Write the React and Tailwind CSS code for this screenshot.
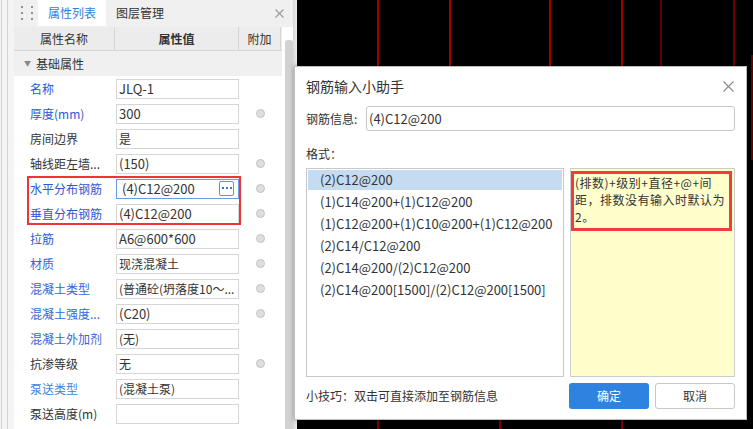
import React from "react";

const rows = [
  { label: "名称", color: "#2c56d8", value: "JLQ-1", lat: true, dot: false },
  { label: "厚度(mm)", color: "#2c56d8", value: "300", lat: true, dot: true },
  { label: "房间边界", color: "#333333", value: "是", lat: false, dot: false },
  { label: "轴线距左墙...", color: "#333333", value: "(150)", lat: true, dot: true },
  { label: "水平分布钢筋", color: "#2c56d8", value: "(4)C12@200", lat: true, dot: true, focus: true },
  { label: "垂直分布钢筋", color: "#2c56d8", value: "(4)C12@200", lat: true, dot: true },
  { label: "拉筋", color: "#2c56d8", value: "A6@600*600", lat: true, dot: true },
  { label: "材质", color: "#3466d8", value: "现浇混凝土", lat: false, dot: true },
  { label: "混凝土类型", color: "#3466d8", value: "(普通砼(坍落度10～...", lat: false, dot: true },
  { label: "混凝土强度...", color: "#3466d8", value: "(C20)", lat: true, dot: true },
  { label: "混凝土外加剂", color: "#3466d8", value: "(无)", lat: false, dot: false },
  { label: "抗渗等级", color: "#333333", value: "无", lat: false, dot: true },
  { label: "泵送类型", color: "#3a86e0", value: "(混凝土泵)", lat: false, dot: false },
  { label: "泵送高度(m)", color: "#333333", value: "", lat: false, dot: false },
];

const formats = [
  "(2)C12@200",
  "(1)C14@200+(1)C12@200",
  "(1)C12@200+(1)C10@200+(1)C12@200",
  "(2)C14/C12@200",
  "(2)C14@200/(2)C12@200",
  "(2)C14@200[1500]/(2)C12@200[1500]",
];

function Dot() {
  return <div className="w-[9px] h-[9px] rounded-full bg-[#dedede] border border-[#c2c2c2]" />;
}

function Row({ r }) {
  return (
    <div className="h-[25px] flex items-center bg-white">
      <div
        className="w-[101px] pl-[16px] text-[12px] whitespace-nowrap overflow-hidden leading-[16px]"
        style={{ color: r.color }}
      >
        {r.label}
      </div>
      <div
        className={
          "ml-[1px] w-[123px] h-[20px] bg-white flex items-center relative " +
          (r.focus ? "border border-[#6b9be3] pl-[5px]" : "border border-[#d6d6d6] pl-[2px]")
        }
      >
        <span className={(r.lat ? "text-[13px]" : "text-[12px]") + " text-[#333] whitespace-nowrap leading-[16px]"}>
          {r.value}
        </span>
        {r.focus && (
          <div className="absolute right-[4px] top-[1px] w-[15px] h-[15px] rounded-[2px] border border-[#5d92df] bg-white flex items-center justify-center gap-[2px]">
            <span className="w-[2px] h-[2px] bg-[#3673d6]" />
            <span className="w-[2px] h-[2px] bg-[#3673d6]" />
            <span className="w-[2px] h-[2px] bg-[#3673d6]" />
          </div>
        )}
      </div>
      <div className="flex-1 flex items-center justify-center">{r.dot && <Dot />}</div>
    </div>
  );
}

function LeftPanel() {
  return (
    <div className="w-[297px] h-full flex shrink-0">
      <div className="w-[14px] h-full bg-[#f4f4f4] flex">
        <div className="w-[1px] h-full bg-[#d2d2d2] ml-[1px]" />
        <div className="w-[1px] h-full bg-[#d2d2d2] ml-[5px]" />
      </div>
      <div className="w-[279px] h-full flex flex-col bg-white">
        <div className="h-[27px] bg-[#f0f0f0] flex items-start shrink-0">
          <div className="w-[24px] pl-[7px] pt-[6px] grid grid-cols-2 gap-x-[3px] gap-y-[4px] content-start">
            {[0, 1, 2, 3, 4, 5].map((i) => (
              <span key={i} className="w-[2px] h-[2px] bg-[#8f8f8f]" />
            ))}
          </div>
          <div className="w-[68px] h-[26px] bg-white flex items-center justify-center text-[12px] text-[#2d7fe0]">
            属性列表
          </div>
          <div className="ml-[10px] h-[26px] flex items-center text-[12px] text-[#333]">图层管理</div>
          <div className="flex-1" />
          <div className="h-[26px] mr-[9px] flex items-center">
            <svg width="9" height="9" viewBox="0 0 9 9">
              <path d="M0.5 0.5 L8.5 8.5 M8.5 0.5 L0.5 8.5" stroke="#9a9a9a" strokeWidth="1.1" />
            </svg>
          </div>
        </div>
        <div className="flex-1 flex min-h-0">
          <div className="relative w-[268px] flex flex-col">
            <div className="h-[24px] flex bg-[#ececec] border-b border-[#d6d6d6] text-[12px] text-[#333]">
              <div className="w-[101px] flex items-center justify-center border-r border-[#d6d6d6]">属性名称</div>
              <div className="w-[124px] flex items-center justify-center border-r border-[#d6d6d6] font-bold">
                属性值
              </div>
              <div className="w-[42px] flex items-center justify-center border-r border-[#d6d6d6]">附加</div>
            </div>
            <div className="h-[25px] flex items-center bg-[#f0f0f0] text-[12px] text-[#333]">
              <span className="ml-[10px] text-[7px] text-[#888]">▼</span>
              <span className="ml-[5px]">基础属性</span>
            </div>
            {rows.map((r, i) => (
              <Row key={i} r={r} />
            ))}
            <div className="absolute left-[13px] top-[149px] w-[214px] h-[49px] border-2 border-[#ee3434]" />
          </div>
          <div className="w-[11px] h-full bg-white flex">
            <div className="ml-[3px] mt-[13px] w-[5px] flex-1 rounded-t-[3px] bg-[#d2d2d2]" />
          </div>
        </div>
      </div>
      <div className="w-[4px] h-full bg-gradient-to-r from-[#d8d8d8] to-[#eeeeee]" />
    </div>
  );
}

function Canvas() {
  return (
    <div className="relative flex-1 h-full bg-black">
      <svg className="absolute inset-0" width="456" height="429" viewBox="0 0 456 429">
        <g strokeWidth="1.4">
          <line x1="81" y1="0" x2="81" y2="70" stroke="#e00000" />
          <line x1="153" y1="0" x2="153" y2="70" stroke="#f00000" />
          <line x1="253" y1="0" x2="253" y2="70" stroke="#f00000" />
          <line x1="325" y1="0" x2="325" y2="70" stroke="#e00000" />
          <line x1="364" y1="0" x2="364" y2="70" stroke="#8a0000" />
          <line x1="437" y1="0" x2="437" y2="70" stroke="#9a0000" />
          <line x1="455" y1="55" x2="455" y2="160" stroke="#8a0000" />
          <line x1="81" y1="415" x2="81" y2="429" stroke="#b00000" />
          <line x1="203" y1="415" x2="203" y2="429" stroke="#b00000" />
          <line x1="325" y1="415" x2="325" y2="429" stroke="#b00000" />
        </g>
      </svg>
    </div>
  );
}

function Dialog() {
  return (
    <div className="absolute left-[294px] top-[66px] w-[453px] h-[354px] bg-white border border-[#bdbdbd] shadow-[0_0_5px_rgba(0,0,0,0.35)] px-[11px] flex flex-col text-[#333]">
      <div className="h-[39px] flex items-center justify-between">
        <span className="text-[14px]">钢筋输入小助手</span>
        <svg width="11" height="11" viewBox="0 0 11 11" className="mr-[1px]">
          <path d="M0.5 0.5 L10.5 10.5 M10.5 0.5 L0.5 10.5" stroke="#8a8a8a" strokeWidth="1.1" />
        </svg>
      </div>
      <div className="h-[25px] flex items-center">
        <span className="w-[60px] text-[12px]">钢筋信息:</span>
        <div className="flex-1 h-[25px] border border-[#c8c8c8] rounded-[3px] flex items-center pl-[2px]">
          <span className="text-[13px]">(4)C12@200</span>
        </div>
      </div>
      <div className="mt-[11px] h-[24px] flex items-center text-[12px]">格式：</div>
      <div className="mt-[2px] h-[209px] flex gap-[6px]">
        <div className="w-[258px] h-full border border-[#c8c8c8] p-[1px] pt-[1px]">
          {formats.map((f, i) => (
            <div
              key={i}
              className={
                "h-[20px] mb-[2px] flex items-center pl-[12px] text-[13px] whitespace-nowrap " +
                (i === 0 ? "bg-[#c5dbf1]" : "")
              }
            >
              {f}
            </div>
          ))}
        </div>
        <div className="flex-1 h-full border border-[#cccccc] bg-[#ffffcc] pt-[2px]">
          <div className="w-[161px] h-[60px] border-[3px] border-[#f03c3c] pl-[1px] text-[12px] leading-[17px] tracking-[0.5px] whitespace-nowrap">
            (排数)+级别+直径+@+间
            <br />
            距，排数没有输入时默认为
            <br />
            2。
          </div>
        </div>
      </div>
      <div className="mt-[6px] h-[26px] flex items-center">
        <span className="flex-1 text-[12px]">小技巧：双击可直接添加至钢筋信息</span>
        <div className="w-[80px] h-[26px] rounded-[3px] bg-[#2e83e0] text-white text-[12px] flex items-center justify-center">
          确定
        </div>
        <div className="ml-[6px] w-[80px] h-[26px] rounded-[3px] border border-[#c8c8c8] bg-white text-[12px] flex items-center justify-center">
          取消
        </div>
      </div>
    </div>
  );
}

export default function App() {
  return (
    <div className="relative w-[753px] h-[429px] overflow-hidden bg-black flex font-['Noto_Sans_CJK_SC','Noto_Sans',sans-serif]">
      <LeftPanel />
      <Canvas />
      <Dialog />
    </div>
  );
}
